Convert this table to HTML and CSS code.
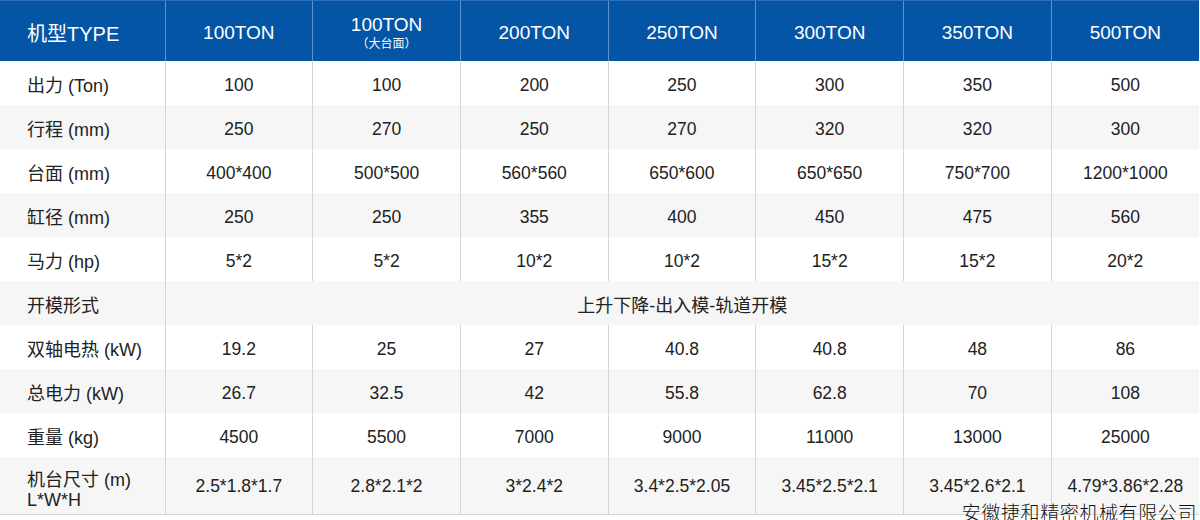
FILE: index.html
```html
<!DOCTYPE html>
<html lang="zh">
<head>
<meta charset="utf-8">
<title>机型参数</title>
<link rel="stylesheet" href="styles.css">
</head>
<body>
<div class="wrap">
<table class="spec">
  <colgroup>
    <col class="c-label">
    <col><col><col><col><col><col><col>
  </colgroup>
  <thead>
    <tr>
      <th class="lbl">机型TYPE</th>
      <th>100TON</th>
      <th class="two"><span class="l1">100TON</span><span class="l2">（大台面）</span></th>
      <th>200TON</th>
      <th>250TON</th>
      <th>300TON</th>
      <th>350TON</th>
      <th>500TON</th>
    </tr>
  </thead>
  <tbody>
    <tr><td class="lbl">出力 (Ton)</td><td>100</td><td>100</td><td>200</td><td>250</td><td>300</td><td>350</td><td>500</td></tr>
    <tr><td class="lbl">行程 (mm)</td><td>250</td><td>270</td><td>250</td><td>270</td><td>320</td><td>320</td><td>300</td></tr>
    <tr><td class="lbl">台面 (mm)</td><td>400*400</td><td>500*500</td><td>560*560</td><td>650*600</td><td>650*650</td><td>750*700</td><td>1200*1000</td></tr>
    <tr><td class="lbl">缸径 (mm)</td><td>250</td><td>250</td><td>355</td><td>400</td><td>450</td><td>475</td><td>560</td></tr>
    <tr><td class="lbl">马力 (hp)</td><td>5*2</td><td>5*2</td><td>10*2</td><td>10*2</td><td>15*2</td><td>15*2</td><td>20*2</td></tr>
    <tr><td class="lbl">开模形式</td><td colspan="7" class="span">上升下降-出入模-轨道开模</td></tr>
    <tr><td class="lbl">双轴电热 (kW)</td><td>19.2</td><td>25</td><td>27</td><td>40.8</td><td>40.8</td><td>48</td><td>86</td></tr>
    <tr><td class="lbl">总电力 (kW)</td><td>26.7</td><td>32.5</td><td>42</td><td>55.8</td><td>62.8</td><td>70</td><td>108</td></tr>
    <tr><td class="lbl">重量 (kg)</td><td>4500</td><td>5500</td><td>7000</td><td>9000</td><td>11000</td><td>13000</td><td>25000</td></tr>
    <tr class="last"><td class="lbl">机台尺寸 (m)<br>L*W*H</td><td>2.5*1.8*1.7</td><td>2.8*2.1*2</td><td>3*2.4*2</td><td>3.4*2.5*2.05</td><td>3.45*2.5*2.1</td><td>3.45*2.6*2.1</td><td>4.79*3.86*2.28</td></tr>
  </tbody>
</table>
<div class="company">安徽捷和精密机械有限公司</div>
</div>
</body>
</html>
```
FILE: styles.css
```css
html, body {
  margin: 0;
  padding: 0;
  background: #ffffff;
}
.wrap {
  position: relative;
  width: 1200px;
  height: 520px;
  overflow: hidden;
}
.spec {
  width: 1199px;
  border-collapse: collapse;
  table-layout: fixed;
  font-family: "Liberation Sans", "Noto Sans CJK SC", sans-serif;
  color: #222222;
}
.c-label {
  width: 165px;
}
.spec thead tr {
  height: 60px;
}
.spec thead th {
  padding: 4px 0 0 0;
  background: #0555a6;
  color: #ffffff;
  font-weight: normal;
  font-size: 19px;
  text-align: center;
  border-left: 1px solid #5c92cf;
  border-top: 1px solid #2e6fb8;
}
.spec thead th:first-child {
  border-left: none;
}
.spec thead th.lbl {
  text-align: left;
  padding-left: 27px;
  font-size: 20px;
}
.spec th.two .l1 {
  display: block;
  line-height: 20px;
  margin-top: 0;
}
.spec th.two .l2 {
  display: block;
  font-size: 12px;
  line-height: 16px;
  font-family: "Noto Sans CJK SC", sans-serif;
}
.spec tbody tr {
  height: 44px;
}
.spec tbody td {
  padding: 5px 0 0 0;
  font-size: 17.5px;
  text-align: center;
  border-left: 1px solid #d6d6d6;
}
.spec tbody td:first-child {
  border-left: none;
}
.spec tbody td.lbl {
  text-align: left;
  padding-left: 27px;
  padding-top: 2px;
  font-size: 18px;
}
.spec tbody td.span {
  font-size: 18px;
  padding-top: 2px;
}
.spec tbody tr:nth-child(even) td {
  background: #f6f6f6;
}
.spec tbody tr.last {
  height: 58px;
}
.spec tbody tr.last td {
  border-bottom: 1px solid #d6d6d6;
  padding-top: 3px;
}
.spec tbody tr.last td.lbl {
  line-height: 20px;
  padding-top: 9px;
}
.company {
  position: absolute;
  right: 3px;
  top: 500px;
  font-family: "Noto Sans CJK SC", sans-serif;
  font-weight: 300;
  font-size: 19px;
  letter-spacing: 0.6px;
  line-height: 24px;
  color: #111111;
}
```
